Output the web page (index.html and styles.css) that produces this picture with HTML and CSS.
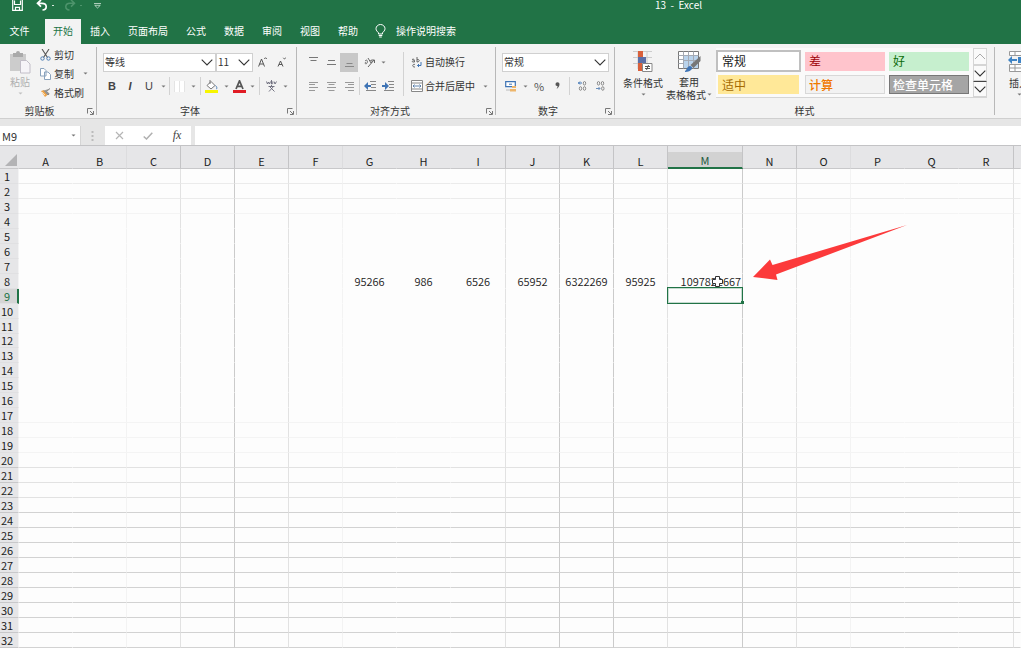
FILE: index.html
```html
<!DOCTYPE html>
<html lang="zh-CN">
<head>
<meta charset="utf-8">
<title>13 - Excel</title>
<link rel="stylesheet" href="styles.css">
</head>
<body>
<svg class="defs" aria-hidden="true">
  <symbol id="chevron" viewBox="0 0 12 7"><path d="M.7.7 6 6 11.3.7" fill="none" stroke="#333" stroke-width="1.1"/></symbol>
  <symbol id="caret" viewBox="0 0 5 3"><path d="M.5.5h4L2.500 2.500z" fill="#777"/></symbol>
  <symbol id="launch" viewBox="0 0 7 7"><path d="M.5 5.500V.5H5.500M3 3l3 3M6.500 3v3.500H3" fill="none" stroke="#777"/></symbol>
</svg>

<header class="top">
  <div class="titlebar">
    <div class="quick">
      <button class="q-save" aria-label="保存"><svg width="11" height="11" viewBox="0 0 11 11"><path d="M.7-.5v10.800h9.600V-.5M2.500.5v4h6v-4M3.500 10V7.300h4V10" fill="none" stroke="#fff" stroke-width="1.2"/></svg></button>
      <button class="q-undo" aria-label="撤消"><svg width="12" height="11" viewBox="0 0 12 11"><path d="M5 0 1.500 3.300 5 6.600M1.500 3.300H6c5.500 0 5.500 6.400.5 6.700" fill="none" stroke="#fff" stroke-width="1.7"/></svg></button>
      <span class="q-dot"></span>
      <button class="q-redo" aria-label="恢复"><svg width="12" height="11" viewBox="0 0 12 11"><path d="M7 0l3.500 3.300L7 6.600M10.500 3.300H6c-5.500 0-5.500 6.400-.5 6.700" fill="none" stroke="#4e946c" stroke-width="1.5"/></svg></button>
      <span class="q-dot dim"></span>
      <button class="q-more" aria-label="自定义快速访问工具栏"><svg width="7" height="6" viewBox="0 0 7 6"><path d="M0 .5h7M.7 2.300h5.600L3.500 5z" fill="none" stroke="#cfe3d7" stroke-width=".8"/></svg></button>
    </div>
    <h1 class="title">13  -  Excel</h1>
  </div>
  <nav class="tabs">
    <button class="tab file">文件</button>
    <button class="tab active">开始</button>
    <button class="tab">插入</button>
    <button class="tab">页面布局</button>
    <button class="tab">公式</button>
    <button class="tab">数据</button>
    <button class="tab">审阅</button>
    <button class="tab">视图</button>
    <button class="tab">帮助</button>
    <button class="tell"><svg width="11" height="14" viewBox="0 0 11 14"><path d="M3.500 10V8.800C2.300 7.500 1 6.500 1 4.700a4.500 4.200 0 0 1 9 0c0 1.800-1.300 2.800-2.500 4.100V10zM3.700 11.500h3.600M4.200 13h2.600" fill="none" stroke="#fff"/></svg>操作说明搜索</button>
  </nav>
</header>

<section class="ribbon">
  <div class="group g-clip">
    <div class="clip-body">
      <button class="big paste" disabled>
        <svg width="22" height="23" viewBox="0 0 22 23"><path d="M1 3h16v17H1z" fill="#ccc"/><path d="M4 2h3a2 2 0 0 1 4 0h3v4H4z" fill="#aaa"/><path d="M11.500 9.500h6l3.500 3.500v9h-9.500z" fill="#f6f4f8" stroke="#c2bec8"/></svg>
        <span>粘贴</span><svg class="caret pale"><use href="#caret"/></svg>
      </button>
      <div class="clip-list">
        <button><svg width="11" height="12" viewBox="0 0 11 12"><path d="M2 0l5.500 8.500M9 0 3.500 8.500" fill="none" stroke="#555" stroke-width="1.100"/><circle cx="2.500" cy="9.500" r="1.700" fill="none" stroke="#4f7fb5"/><circle cx="8.500" cy="9.500" r="1.700" fill="none" stroke="#4f7fb5"/></svg>剪切</button>
        <button><svg width="11" height="12" viewBox="0 0 11 12"><path d="M.5.500H4L6 2.500V8H.5zM4.500 4H8l2.500 2.500v5h-6z" fill="#fff" stroke="#8ba3bd"/></svg>复制<svg class="caret"><use href="#caret"/></svg></button>
        <button><svg width="11" height="12" viewBox="0 0 11 12"><path d="M1 4l4 6 2.500-2L4 3z" fill="#eda349"/><path d="M4 3.500 8 8l1.200-1.200L6.500 4.500 10 1.500" fill="#999" stroke="#888"/><path d="M2 5l3 3" stroke="#fbe0b8"/></svg>格式刷</button>
      </div>
    </div>
    <div class="label"><span>剪贴板</span><button aria-label="剪贴板设置"><svg><use href="#launch"/></svg></button></div>
  </div>

  <div class="group g-font">
    <div class="body">
      <div class="row">
        <label class="pick pick-font"><select aria-label="字体"><option>等线</option></select><svg><use href="#chevron"/></svg></label>
        <label class="pick pick-size"><select aria-label="字号"><option>11</option></select><svg><use href="#chevron"/></svg></label>
        <button class="w18" aria-label="增大字号"><svg width="9" height="10" viewBox="0 0 9 10"><path d="M.6 9.500 3.500 2l3 7.500M1.700 7h3.700M6.300 2 7.500.7 8.800 2" fill="none" stroke="#555"/></svg></button>
        <button class="w20" aria-label="减小字号"><svg width="9" height="10" viewBox="0 0 9 10"><path d="M1 9.500 3.500 4 6 9.500M2 7.500h3M6.300.8 7.500 2 8.800.8" fill="none" stroke="#555"/></svg></button>
      </div>
      <div class="row">
        <button class="w18 bold">B</button>
        <button class="w18 italic">I</button>
        <button class="w20 under">U</button>
        <svg class="caret"><use href="#caret"/></svg><i class="sep"></i>
        <button class="w16" aria-label="边框"><svg width="11" height="11" viewBox="0 0 11 11"><path d="M0 0h11v11H0z" fill="#fff"/><path d="M.5 0v11M5.500 0v11M10.500 0v11" stroke="#e4e4e4"/></svg></button>
        <svg class="caret wide"><use href="#caret"/></svg><i class="sep"></i>
        <button class="w18" aria-label="填充颜色"><svg width="13" height="13" viewBox="0 0 13 13"><path d="M2 5.500 6 1.500 10 5.500 6 9z" fill="#fff" stroke="#777"/><path d="M5 0v4" stroke="#777"/><path d="M10.500 5.500c2 2 1.500 3.500.5 3.500" fill="none" stroke="#4f7fb5"/><path d="M0 10h13v3H0z" fill="#f7f500"/></svg></button>
        <svg class="caret wide"><use href="#caret"/></svg>
        <button class="w14" aria-label="字体颜色"><svg width="13" height="13" viewBox="0 0 13 13"><path d="M3 9 6.500.8 10 9M4.200 6.300h4.600" fill="none" stroke="#555" stroke-width="1.700"/><path d="M0 10h13v3H0z" fill="#e01b24"/></svg></button>
        <svg class="caret wide"><use href="#caret"/></svg><i class="sep"></i>
        <button class="w20" aria-label="拼音字段"><svg width="11" height="12" viewBox="0 0 11 12"><path d="M.5 1.500 1.500 4 2.500 2l1 2 1-2.500M5.500 0v4c2 0 2-2.500 0-2M8 1.500 9 4l1.500-2.500M2.500 6.500h6M5.500 5v1.500M7.500 6.500 3 11.500M3.500 6.500l5 5" fill="none" stroke="#667" stroke-width=".9"/></svg></button>
        <svg class="caret"><use href="#caret"/></svg>
      </div>
    </div>
    <div class="label"><span>字体</span><button aria-label="字体设置"><svg><use href="#launch"/></svg></button></div>
  </div>

  <div class="group g-align">
    <div class="body split">
      <div class="half">
        <div class="row">
          <button class="w18" aria-label="顶端对齐"><svg width="9" height="10" viewBox="0 0 9 10"><path d="M0 .5h9M1.500 3.500h6" stroke="#777"/></svg></button>
          <button class="w18" aria-label="垂直居中"><svg width="9" height="10" viewBox="0 0 9 10"><path d="M1 3.500h7M0 7.500h9" stroke="#777"/></svg></button>
          <button class="w18 on" aria-label="底端对齐"><svg width="9" height="10" viewBox="0 0 9 10"><path d="M1.500 6.500h6M0 9.500h9" stroke="#888"/></svg></button>
          <i class="sep none"></i>
          <button class="w18" aria-label="方向"><svg width="12" height="11" viewBox="0 0 12 11"><path d="M1 4c2-2 3 0 2 2S0 6 2 5M4 1l3 5c2-1 1-4-1-2M4 10l6-7M7.500 3H10.500V6" fill="none" stroke="#666"/></svg></button>
          <svg class="caret"><use href="#caret"/></svg>
        </div>
        <div class="row">
          <button class="w18" aria-label="左对齐"><svg width="9" height="10" viewBox="0 0 9 10"><path d="M0 1.500h9M0 3.500h6M0 6.500h9M0 9.500h6" stroke="#999"/></svg></button>
          <button class="w18" aria-label="居中"><svg width="9" height="10" viewBox="0 0 9 10"><path d="M0 1.500h9M1.500 3.500h6M0 6.500h9M1.500 9.500h6" stroke="#999"/></svg></button>
          <button class="w18" aria-label="右对齐"><svg width="9" height="10" viewBox="0 0 9 10"><path d="M0 1.500h9M3 3.500h6M0 6.500h9M3 9.500h6" stroke="#999"/></svg></button>
          <i class="sep"></i>
          <button class="w18" aria-label="减少缩进"><svg width="12" height="10" viewBox="0 0 12 10"><path d="M6 .5h6M7 3.500h5M7 6.500h5M2 9.500h10" stroke="#888"/><path d="M0 5l4-4v3H7v2H4v3z" fill="#3f74b5"/></svg></button>
          <button class="w18" aria-label="增加缩进"><svg width="12" height="10" viewBox="0 0 12 10"><path d="M6 .5h6M7 3.500h5M7 6.500h5M2 9.500h10" stroke="#888"/><path d="M7 5 3 1v3H0v2h3v3z" fill="#3f74b5"/></svg></button>
        </div>
      </div>
      <i class="sep tall"></i>
      <div class="half">
        <div class="row"><button class="text"><svg width="12" height="11" viewBox="0 0 12 11"><path d="M1 2.500c2-1 2.500 0 2.500 2.500-3 .5-3-1.500 0-1.200M6 0v5c3 0 3-3 0-2.500M4 7.500c-3-1-3 3 0 2.500" fill="none" stroke="#666"/><path d="M10 5v3.500H6.500M8 7 6.500 8.500 8 10" fill="none" stroke="#3f74b5"/></svg>自动换行</button></div>
        <div class="row"><button class="text"><svg width="12" height="12" viewBox="0 0 12 12"><path d="M.5.500h11v11H.5zM.5 3h11M.5 9h11" fill="#fff" stroke="#888"/><path d="M2 6h8M3.500 4.500 2 6l1.500 1.500M8.500 4.500 10 6 8.500 7.500" fill="none" stroke="#5f83ad"/></svg>合并后居中<svg class="caret"><use href="#caret"/></svg></button></div>
      </div>
    </div>
    <div class="label"><span>对齐方式</span><button aria-label="对齐设置"><svg><use href="#launch"/></svg></button></div>
  </div>

  <div class="group g-num">
    <div class="body">
      <div class="row"><label class="pick pick-num"><select aria-label="数字格式"><option>常规</option></select><svg><use href="#chevron"/></svg></label></div>
      <div class="row">
        <button class="w20" aria-label="会计数字格式"><svg width="12" height="11" viewBox="0 0 12 11"><path d="M.7.700h9.600v5H.7z" fill="#fff" stroke="#3f74b5" stroke-width="1.200"/><path d="M4 3.200h3" stroke="#3f74b5"/><path d="M7 5h4v2H7zM5 8h6v2.500H5z" fill="#edb56b"/><path d="M1 9h4" stroke="#bbb"/></svg></button>
        <svg class="caret"><use href="#caret"/></svg>
        <button class="w18 pct">%</button>
        <button class="w18" aria-label="千位分隔样式"><svg width="5" height="8" viewBox="0 0 5 8"><path d="M.5 2a2 1.800 0 0 1 4 0c0 2-1 3.800-3 5 1-1.500 1-2 1-3A1.800 1.800 0 0 1 .5 2z" fill="#555"/></svg></button>
        <i class="sep gap"></i>
        <button class="w18" aria-label="增加小数位数"><svg width="9" height="10" viewBox="0 0 9 10"><path d="M4 2H0M2 .5.500 2 2 3.500" stroke="#3f74b5" fill="none"/><ellipse cx="6.500" cy="2.300" rx="1.200" ry="1.800" fill="none" stroke="#888"/><ellipse cx="2.500" cy="7.500" rx="1.200" ry="1.800" fill="none" stroke="#888"/><ellipse cx="6.500" cy="7.500" rx="1.200" ry="1.800" fill="none" stroke="#888"/></svg></button>
        <button class="w18" aria-label="减少小数位数"><svg width="9" height="10" viewBox="0 0 9 10"><ellipse cx="2.500" cy="2.300" rx="1.200" ry="1.800" fill="none" stroke="#888"/><ellipse cx="6.500" cy="2.300" rx="1.200" ry="1.800" fill="none" stroke="#888"/><path d="M0 7.500h4M2.500 6 4 7.500 2.500 9" stroke="#6c8fbb" fill="none"/><ellipse cx="6.800" cy="7.500" rx="1.200" ry="1.800" fill="none" stroke="#888"/></svg></button>
      </div>
    </div>
    <div class="label"><span>数字</span><button aria-label="数字设置"><svg><use href="#launch"/></svg></button></div>
  </div>

  <div class="group g-style">
    <div class="style-body">
      <button class="big cond">
        <svg width="20" height="22" viewBox="0 0 20 22"><path d="M0 .500h19M0 6.500h19M0 12.500h19M5 0v18M14 0v13" stroke="#ccc"/><path d="M5 0h5v6H5z" fill="#d9603b"/><path d="M5 6h8v6H5z" fill="#5b6fa8"/><path d="M5 12h4v8H5z" fill="#d9603b"/><path d="M9.500 12.500h9.500v8H9.500z" fill="#fff" stroke="#888"/><path d="M12 15.500h5M12 17.500h5M15.500 14l-2 5" stroke="#555"/></svg>
        <span>条件格式</span><svg class="caret"><use href="#caret"/></svg>
      </button>
      <button class="big table-fmt">
        <svg width="23" height="22" viewBox="0 0 23 22"><path d="M.500.500h20v17H.5z" fill="#fff" stroke="#777"/><path d="M6 5h14v12H6z" fill="#b9d3ec"/><path d="M.5 4.500h20M.5 8.500h5M.5 12.500h5M5.500.5v17M10.500.5v17M15.500.5v17M6 9.500h14" stroke="#a4aab4"/><path d="M22.500 5v5l-7 7-3-3z" fill="#777"/><path d="M7 20c2-1 2-5 5-5 4 1 2 6-5 6z" fill="#3f74b5"/></svg>
        <span>套用</span><span class="line2">表格格式<svg class="caret"><use href="#caret"/></svg></span>
      </button>
      <div class="gallery">
        <div class="swatches">
          <button class="sw normal">常规</button><button class="sw bad">差</button><button class="sw good">好</button>
          <button class="sw neutral">适中</button><button class="sw calc">计算</button><button class="sw check">检查单元格</button>
        </div>
        <div class="scroll">
          <button aria-label="上一行"><svg class="up" viewBox="0 0 12 7"><path d="M1 6l5-5 5 5" fill="none" stroke="#aaa"/></svg></button>
          <button aria-label="下一行"><svg><use href="#chevron"/></svg></button>
          <button class="more" aria-label="其他"><svg><use href="#chevron"/></svg></button>
        </div>
      </div>
    </div>
    <div class="label"><span>样式</span></div>
  </div>

  <div class="group g-cells">
    <button class="big insert">
      <svg width="22" height="22" viewBox="0 0 22 22"><path d="M1.500.5h19v4h-19zM1.500 13.500h19v7h-19zM1.500 17h19M7 .5v4M14 .5v4M7 13.500v7M14 13.500v7" fill="#fff" stroke="#999"/><path d="M0 9l4-4v3h5v2H4v3zM10 6h9v6h-9z" fill="#3f84c5"/></svg>
      <span>插入</span><svg class="caret"><use href="#caret"/></svg>
    </button>
  </div>
</section>

<section class="formula">
  <div class="namebox"><input aria-label="名称框" value="M9"><svg class="caret"><use href="#caret"/></svg></div>
  <svg class="dots" width="3" height="10" viewBox="0 0 3 10"><path d="M.5 0h2v2h-2zM.5 4h2v2h-2zM.5 8h2v2h-2z" fill="#bbb"/></svg>
  <div class="fx">
    <button aria-label="取消"><svg width="9" height="9" viewBox="0 0 9 9"><path d="M1 1l7 7M8 1 1 8" stroke="#b5b5b5" stroke-width="1.200"/></svg></button>
    <button aria-label="输入"><svg width="10" height="8" viewBox="0 0 10 8"><path d="M.7 4.500 3.500 7 9.300.7" fill="none" stroke="#b0b0b0" stroke-width="1.500"/></svg></button>
    <button class="fn">fx</button>
  </div>
  <input class="formula-input" aria-label="编辑栏">
</section>

<main class="sheet">
  <table>
    <colgroup id="cols"></colgroup>
    <thead><tr id="head"></tr></thead>
    <tbody id="rows"></tbody>
  </table>
  <svg class="arrow" width="154" height="56" viewBox="0 0 154 56"><path d="M0 52 17 34.500 19.500 40 154 0 23 49.500 24.500 55z" fill="#fc3a3b"/></svg>
</main>
<script src="sheet.js"></script>
</body>
</html>
```
FILE: styles.css
```css
* { box-sizing: border-box; }
body {
  margin: 0;
  min-height: 100vh;
  overflow: hidden;
  background: #e6e6e6;
  color: #333;
  font: 10px/14px "Noto Sans CJK SC", "Noto Sans", sans-serif;
}
button {
  display: flex;
  align-items: center;
  justify-content: center;
  padding: 0;
  border: 0;
  background: none;
  color: inherit;
  font: inherit;
  white-space: nowrap;
}
svg { display: block; flex: none; }
.defs { position: absolute; width: 0; height: 0; }

/* title bar and tabs */
.top { background: #217346; color: #fff; }
.titlebar { display: flex; height: 19px; align-items: flex-start; }
.quick { display: flex; width: 655px; padding-left: 12px; align-items: center; height: 11px; }
.q-undo { margin-left: 13px; }
.q-redo { margin-left: 10px; }
.q-more { margin-left: 12px; }
.q-dot { width: 2px; height: 1px; margin-left: 4px; background: #d5e6dc; }
.q-dot.dim { background: #4e946c; }
.title { margin: 0; font-size: 10px; line-height: 10px; font-weight: 400; white-space: pre; }
.tabs { display: flex; height: 25px; }
.tab { padding: 0 9px 2px; }
.tab.file { width: 45px; padding: 0 6px 2px 0; }
.tab.active { width: 36px; padding: 0 0 2px; background: #f3f3f3; color: #217346; }
.tell { gap: 10px; margin-left: 8px; padding-bottom: 2px; }

/* ribbon */
.ribbon {
  display: flex;
  height: 75px;
  overflow: hidden;
  background: #f3f3f3;
  border-bottom: 1px solid #cfcfcf;
}
.group {
  display: grid;
  grid-template-rows: 1fr 14px;
  flex: none;
  position: relative;
  padding: 4px 0 0 5px;
}
.group::after {
  content: "";
  position: absolute;
  top: 3px;
  right: 0;
  bottom: 3px;
  width: 1px;
  background: #b8b8b8;
}
.g-clip { width: 97px; padding-left: 0; }
.g-font { width: 200px; padding-left: 6px; }
.g-align { width: 199px; padding-left: 7px; }
.g-num { width: 119px; }
.g-style { width: 380px; }
.g-cells { width: 80px; }
.body { display: grid; grid-template-rows: 20px 20px; gap: 4px; align-content: start; padding-top: 4px; }
.row { display: flex; align-items: center; }
.label { display: grid; grid-template-columns: 12px 1fr 12px; }
.label span { grid-column: 2; text-align: center; }
.label button { padding-right: 2px; }
.g-clip .label span { padding-right: 18px; }
.g-font .label span { padding-right: 20px; }
.g-align .label span { padding-right: 20px; }
.g-num .label span { padding-right: 20px; }
.g-style .label span { padding-right: 6px; }
.label svg { width: 7px; height: 7px; }
.caret { width: 5px; height: 3px; margin: 0 2px; }
.caret.wide { margin: 0 3px 0 4px; }
.caret.pale { opacity: .4; }
.sep { flex: none; width: 1px; height: 18px; margin: 0 1px; background: #d2d2d2; }
.sep.none { background: none; }
.sep.gap { margin: 0 3px; }
.sep.tall { height: 44px; }
.w14 { width: 14px; }
.w16 { width: 16px; }
.w18 { width: 18px; height: 19px; }
.w20 { width: 20px; }
.on { background: #c8c8c8; }
.bold { font: 700 11px "Liberation Sans", sans-serif; color: #444; }
.italic { font: italic 700 11px "Liberation Sans", sans-serif; color: #444; }
.under { font: 11px "Liberation Sans", sans-serif; color: #444; }
.pct { font-size: 11px; color: #555; }

.pick { display: grid; align-items: center; height: 19px; }
.pick > * { grid-area: 1 / 1; }
.pick select {
  appearance: none;
  width: 100%;
  height: 19px;
  padding: 0 0 0 1px;
  border: 1px solid #d0d0d0;
  border-radius: 0;
  background: #fff;
  color: #333;
  font: inherit;
}
.pick svg { width: 12px; height: 7px; margin-right: 3px; justify-self: end; pointer-events: none; }
.pick-font { width: 113px; }
.pick-size { width: 37px; }
.pick-num { width: 107px; margin-left: 1px; }

.clip-body { display: flex; }
.big { flex-direction: column; justify-content: flex-start; line-height: 12px; }
.paste { width: 40px; padding-top: 3px; color: #b0b0b0; }
.paste span { padding-top: 2px; }
.paste .caret { margin-top: 4px; }
.clip-list { display: grid; grid-template-rows: repeat(3, 19px); align-content: start; justify-items: start; margin-top: -3px; }
.clip-list button { gap: 3px; }
.clip-list .caret { margin-left: 6px; }

.split { display: flex; gap: 0; align-items: flex-start; }
.half { display: grid; grid-template-rows: 20px 20px; gap: 4px; }
.half:first-child { width: 98px; }
.half:last-child { margin-left: 6px; }
.text { gap: 2px; }
.text .caret { margin-left: 6px; }

.style-body { display: flex; }
.cond { width: 46px; padding-top: 3px; }
.cond span { padding-top: 4px; }
.cond .caret { margin-top: 4px; }
.table-fmt { width: 46px; padding-top: 3px; line-height: 13px; }
.table-fmt > span:first-of-type { padding-top: 2px; }
.line2 { display: flex; align-items: center; }
.line2 .caret { margin-right: 0; margin-left: 1px; }
.gallery { display: flex; height: 50px; margin-left: 4px; border-bottom: 1px solid #d5d5d5; background: #fafafa; }
.swatches { display: grid; grid-template-columns: 85px 80px 80px; grid-template-rows: 22px 19px; column-gap: 4px; row-gap: 3px; padding: 2px 4px 0 0; }
.sw { justify-content: flex-start; align-self: center; height: 19px; padding-left: 4px; font-size: 12px; }
.normal { height: 22px; border: 2px solid #c0c0c0; background: #fff; color: #222; }
.bad { background: #ffc4cc; color: #9c0006; }
.good { background: #c6efce; color: #0b6b0b; }
.neutral { margin: 0 2px; background: #ffe898; color: #a56a00; }
.calc { padding-left: 3px; border: 1px solid #d8d8d8; background: #f2f2f2; color: #f07800; font-weight: 500; }
.check { padding-left: 3px; border: 1px solid #777; background: #a5a5a5; color: #fff; font-weight: 500; }
.scroll { display: grid; grid-template-rows: 17px 16px 16px; width: 14px; }
.scroll button { border: 1px solid #d5d5d5; }
.scroll svg { width: 12px; height: 7px; }
.scroll .more { border-top-color: #444; }
.insert { align-items: center; width: 38px; padding: 3px 0 0 0; }
.insert span { padding-top: 4px; }
.insert .caret { margin-top: 4px; }

/* formula bar */
.formula { display: flex; align-items: center; height: 27px; padding-top: 7px; border-bottom: 1px solid #c3c3c5; }
.formula input { border: 0; padding: 0; background: #fff; color: #333; font: inherit; font-size: 11px; height: 19px; border-radius: 0; outline: 0; }
.namebox { display: flex; align-items: center; width: 81px; background: #fff; border-right: 1px solid #d5d5d5; }
.formula .namebox input { flex: 1; min-width: 0; padding-left: 2px; }
.namebox .caret { margin-right: 4px; }
.dots { margin: 0 11px 0 10px; }
.fx { display: grid; grid-template-columns: 28px 30px 28px; height: 19px; background: #fff; }
.fn { font: italic 12px "Liberation Serif", serif; color: #444; }
.formula .formula-input { flex: 1; min-width: 0; margin-left: 4px; }

/* worksheet */
.sheet { position: relative; background: #fdfdfd; }
table { width: 100%; table-layout: fixed; border-spacing: 0; font-size: 11px; color: #222; }
.c-head { width: 19px; }
.c-std { width: 54px; }
.c-std1 { width: 55px; }
.c-sum { width: 75px; }
th, td { padding: 0; font-weight: 400; white-space: nowrap; border: 0 solid #fdfdfd; border-width: 0 1px 1px 0; }
thead th { height: 23px; padding-top: 8px; line-height: 14px; background: #e6e6e8; border-color: #c8c8ca; border-right-color: #e6e6e8; }
thead .corner { position: relative; }
.corner svg { position: absolute; right: 1px; bottom: 2px; }
thead th.picked { background: linear-gradient(#e6e6e8 6px, #d2d2d2 6px); border-bottom: 2px solid #217346; color: #21583c; line-height: 13px; }
tbody th, td { height: 15px; line-height: 14px; }
.short th, .short td { height: 14px; line-height: 13px; }
tbody th { padding-right: 4px; background: #e6e6e8; border-color: #e0e0e2; border-right-color: #f3f3f4; text-align: center; }
tbody th.picked { background: #d5d5d5; border-right: 2px solid #217346; color: #217346; padding-right: 3px; }
td { text-align: center; font-weight: 350; }
td.sum { text-align: right; padding-right: 1px; }

.line-a td { border-bottom-color: #ebebeb; }
.line-b td { border-bottom-color: #f4f4f4; }
.line-c td { border-bottom-color: #e2e2e2; }
.line-d td { border-bottom-color: #d2d2d2; }
.line-c th, .line-d th { border-bottom-color: #c8c8ca; }
.v1 { border-right-color: #f3f3f3; }
.v2 { border-right-color: #e2e2e2; }
.v3 { border-right-color: #cbcbcb; }
thead .v1 { border-right-color: #dcdcde; }
thead .v2, thead .v3 { border-right-color: #c4c4c6; }

.active-cell { position: relative; }
.active-cell::before {
  content: "";
  position: absolute;
  inset: -2px -1px -1px -1px;
  border: 1px solid #217346;
  box-shadow: inset 0 0 0 1px #21734640;
}
.active-cell::after {
  content: "";
  position: absolute;
  right: -2px;
  bottom: -1px;
  width: 3px;
  height: 3px;
  background: #217346;
}
.has-cursor { position: relative; }
.cursor { position: absolute; right: 18px; top: 1px; }
.arrow { position: absolute; left: 753px; top: 79px; }
```
FILE: sheet.js
```js
const letters = 'ABCDEFGHIJKLMNOPQR'.split('').concat('');
const values = { G: '95266', H: '986', I: '6526', J: '65952', K: '6322269', L: '95925', M: '1097822667' };
const vertical = { B: 'v1', C: 'v2', D: 'v3', E: 'v2', F: 'v1', I: 'v2', J: 'v3', K: 'v3', L: 'v2', M: 'v3', N: 'v2', O: 'v1', R: 'v2' };
const cursor = '<svg class="cursor" width="13" height="13" viewBox="0 0 13 13"><path d="M4.500 1.500h4v3h3v4h-3v3h-4v-3h-3v-4h3z" fill="#fff" stroke="#333"/></svg>';

function lineClass(row) {
  if (row <= 2) return 'line-a';
  if (row === 3) return 'line-b';
  if (row < 17) return '';
  if (row < 20) return 'line-b';
  return row < 23 ? 'line-c' : 'line-d';
}

function colClass(letter) {
  if (letter === '') return '';
  if (letter === 'M') return 'c-sum';
  return letter === 'I' || letter === 'R' ? 'c-std1' : 'c-std';
}

function cell(letter, row) {
  const classes = [vertical[letter] || ''];
  let content = '';
  if (row === 8 && values[letter]) content = values[letter];
  if (letter === 'M' && row === 8) {
    classes.push('sum', 'has-cursor');
    content += cursor;
  }
  if (letter === 'M' && row === 9) classes.push('active-cell');
  return `<td class="${classes.join(' ')}">${content}</td>`;
}

document.getElementById('cols').innerHTML =
  '<col class="c-head">' + letters.map(l => `<col class="${colClass(l)}">`).join('');

document.getElementById('head').innerHTML =
  '<th class="corner"><svg width="12" height="12" viewBox="0 0 12 12"><path d="M12 0v12H0z" fill="#b3b3b5"/></svg></th>' +
  letters.map(l => `<th class="${vertical[l] || ''} ${l === 'M' ? 'picked' : ''}">${l}</th>`).join('');

document.getElementById('rows').innerHTML = Array.from({ length: 32 }, (_, i) => i + 1).map(row =>
  `<tr class="${lineClass(row)} ${row === 12 ? 'short' : ''}"><th class="${row === 9 ? 'picked' : ''}">${row}</th>` +
  letters.map(l => cell(l, row)).join('') + '</tr>').join('');
```
